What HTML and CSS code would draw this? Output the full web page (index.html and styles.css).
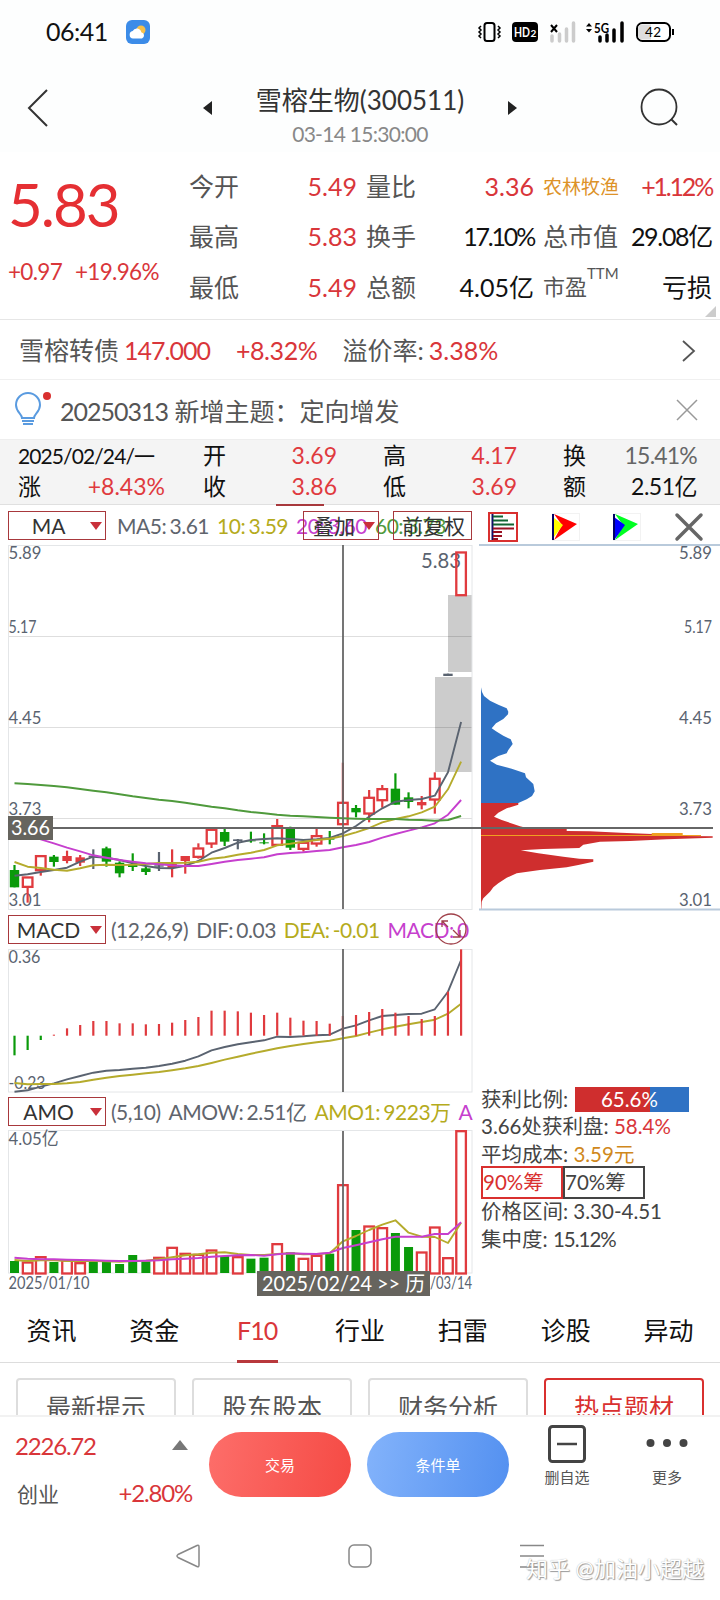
FILE: index.html
```
<!DOCTYPE html>
<html lang="zh-CN">
<head>
    <meta charset="UTF-8">
    <meta name="viewport" content="width=device-width, initial-scale=1.0">
    <title>雪榕生物(300511)</title>
    <link rel="stylesheet" href="styles.css">
</head>
<body>

    <div class="status-bar">
        <span class="time">06:41</span>
        <svg class="weather" width="24" height="24" viewBox="0 0 24 24">
            <rect width="24" height="24" rx="6" fill="#3c8ce8"/>
            <circle cx="15" cy="10" r="4.5" fill="#f7c04a"/>
            <path d="M7 18.500a3.800 3.800 0 0 1-.3-7.500 4.600 4.600 0 0 1 8.600 1.200 3.300 3.300 0 0 1 .7 6.300z" fill="#fff"/>
        </svg>
        <svg class="status-icons" width="200" height="24" viewBox="474 20 200 24">
            <rect x="484.500" y="23" width="10" height="18" rx="2.500" fill="none" stroke="#000" stroke-width="2"/>
            <path d="M481 26l-2 2 2 2-2 2 2 2-2 2 2 2M498 26l2 2-2 2 2 2-2 2 2 2-2 2" fill="none" stroke="#000" stroke-width="1.500"/>
            <rect x="512" y="22" width="26" height="20" rx="4" fill="#000"/>
            <text x="514" y="37" font-size="14" font-weight="700" fill="#fff" textLength="16" lengthAdjust="spacingAndGlyphs">HD</text>
            <text x="530.500" y="37" font-size="10" font-weight="700" fill="#fff">2</text>
            <path d="M551 25l6 7M557 25l-6 7" stroke="#000" stroke-width="2"/>
            <path d="M552 41v-5M559.500 41v-7M566.500 41V29M573.500 41V23" stroke="#ccc" stroke-width="3.500" stroke-linecap="round"/>
            <path d="M586 26.500l3-3.500 3 3.500zM586 29l3 3.500 3-3.500z" fill="#000"/>
            <text x="594" y="33" font-size="13" font-weight="700" textLength="15" lengthAdjust="spacingAndGlyphs">5G</text>
            <path d="M600 41v-4M607 41v-6M614 41V30M622 41V23" stroke="#000" stroke-width="3.500" stroke-linecap="round"/>
            <rect x="637" y="23" width="33" height="18" rx="5.500" fill="#fff" stroke="#000" stroke-width="2"/>
            <path d="M642 24.500h9v15h-9a4 4 0 0 1-4-4v-7a4 4 0 0 1 4-4z" fill="#ddd"/>
            <path d="M673 29v6" stroke="#000" stroke-width="2"/>
            <text x="645" y="37" font-size="13.500" textLength="16">42</text>
        </svg>
    </div>

    <div class="header">
        <svg class="back" width="22" height="40" viewBox="0 0 22 40"><path d="M20 2L2 20l18 18" fill="none" stroke="#333" stroke-width="2"/></svg>
        <span class="arrow-left"></span>
        <div class="title">
            <h1>雪榕生物(300511)</h1>
            <p>03-14 15:30:00</p>
        </div>
        <span class="arrow-right"></span>
        <svg class="search" width="40" height="40" viewBox="0 0 40 40"><circle cx="19" cy="19" r="17.500" fill="none" stroke="#333" stroke-width="1.800"/><path d="M31 31l6 6" stroke="#333" stroke-width="2"/></svg>
    </div>

    <div class="quote">
        <div class="price">
            <div class="now">5.83</div>
            <div class="change"><span>+0.97</span><span>+19.96%</span></div>
        </div>
        <div class="quote-grid">
            <span>今开</span><b class="red">5.49</b><span>量比</span><b class="red">3.36</b><span class="sector">农林牧渔</span><b class="red tight">+1.12%</b>
            <span>最高</span><b class="red">5.83</b><span>换手</span><b class="tight">17.10%</b><span>总市值</span><b class="cap">29.08亿</b>
            <span>最低</span><b class="red">5.49</b><span>总额</span><b>4.05亿</b><span class="pe">市盈<sup>TTM</sup></span><b>亏损</b>
        </div>
        <i class="corner"></i>
    </div>

    <div class="bond">
        <span>雪榕转债</span><b class="red code">147.000</b><b class="red rate">+8.32%</b><span>溢价率:</span><b class="red prem">3.38%</b>
        <svg width="16" height="24" viewBox="0 0 16 24"><path d="M2 2l11 10L2 22" fill="none" stroke="#555" stroke-width="1.800"/></svg>
    </div>

    <div class="notice">
        <svg class="bulb" width="40" height="36" viewBox="0 0 40 36">
            <path d="M9 26c0-4-6-6-6-13a12 12 0 0 1 24 0c0 7-6 9-6 13z" fill="none" stroke="#5a9be0" stroke-width="2"/>
            <path d="M9 29h12M10 32h10" stroke="#5a9be0" stroke-width="1.800"/>
            <circle cx="34" cy="4" r="4" fill="#d9302f"/>
        </svg>
        <span class="notice-text"><span class="num">20250313</span> 新增主题：定向增发</span>
        <svg width="22" height="22" viewBox="0 0 22 22"><path d="M1 1l20 20M21 1L1 21" stroke="#999" stroke-width="1.500"/></svg>
    </div>

    <div class="ohlc">
        <span class="day">2025/02/24/一</span><span>开</span><b>3.69</b><span>高</span><b>4.17</b><span>换</span><b class="gray">15.41%</b>
        <span class="up">涨<b>+8.43%</b></span><span>收</span><b>3.86</b><span>低</span><b>3.69</b><span>额</span><b class="black">2.51亿</b>
    </div>

    <div class="charts">
        <div class="left">
            <div class="indicator ma">
                <div class="select">MA</div>
                <span class="c-dark">MA5: 3.61</span><span class="c-yellow">10: 3.59</span><span class="c-purple">20: 3.60</span><span class="c-green">60: 3.73</span>
                <div class="overlay add">叠加</div>
                <div class="overlay adjust">前复权</div>
            </div>
            <svg id="kline" width="476" height="365" viewBox="0 545 476 365">
                <g fill="#ccc"><rect x="448" y="595" width="24" height="77"/><rect x="435" y="677" width="37" height="95"/></g>
                <path d="M8 636.500h464M8 727.500h464M8 818.500h464" stroke="#000" stroke-opacity=".13"/>
                <rect x="8.500" y="545.500" width="463.500" height="364" fill="none" stroke="#e4e6e8"/>
            </svg>
            <div class="indicator macd">
                <div class="select">MACD</div>
                <span class="c-dark par">(12,26,9)</span><span class="c-dark">DIF: 0.03</span><span class="c-yellow">DEA: -0.01</span><span class="c-purple">MACD: 0</span>
                <svg class="expand" width="32" height="32" viewBox="0 0 32 32" fill="none" stroke="#a0404a" stroke-width="1.300"><circle cx="16" cy="16" r="15"/><path d="M7 14V8h6M7 8l6 6M25 17v7h-7M25 24l-7-7"/></svg>
            </div>
            <svg id="macd" width="476" height="144" viewBox="0 949 476 144">
                <rect x="8.500" y="949.500" width="463.500" height="142.500" fill="none" stroke="#e4e6e8"/>
            </svg>
            <div class="indicator amo">
                <div class="select">AMO</div>
                <span class="c-dark par">(5,10)</span><span class="c-dark">AMOW: 2.51亿</span><span class="c-yellow">AMO1: 9223万</span><span class="c-purple">A</span>
            </div>
            <svg id="amo" width="476" height="170" viewBox="0 1130 476 170">
                <rect x="8.500" y="1130.500" width="463.500" height="142.500" fill="none" stroke="#e4e6e8"/>
            </svg>
        </div>
        <div class="right">
            <div class="tools">
                <svg width="30" height="30" viewBox="0 0 30 30">
                    <rect x="1" y="1" width="28" height="28" fill="#fff" stroke="#d9302f" stroke-width="2"/>
                    <path d="M4.500 2v26" stroke="#116" stroke-width="2"/>
                    <path d="M5 4.500h10M5 8.500h15M5 12.500h21" stroke="#163" stroke-width="1.800"/>
                    <path d="M5 16.500h21M5 20h9M5 24h9M5 27h5" stroke="#912" stroke-width="1.800"/>
                </svg>
                <svg width="28" height="28" viewBox="0 0 28 28"><rect x=".5" y=".5" width="27" height="27" fill="none" stroke="#f2f2f2"/><path d="M2 1l23 10L2 27l8-15z" fill="#f00"/><path d="M2 5l9 7-9 12z" fill="#ff0"/><path d="M1 1v26" stroke="#006" stroke-width="2"/></svg>
                <svg width="28" height="28" viewBox="0 0 28 28"><rect x=".5" y=".5" width="27" height="27" fill="none" stroke="#f2f2f2"/><path d="M2 1l23 10L2 27l8-15z" fill="#0f2"/><path d="M1 4l11 8L2 26z" fill="#00f"/><path d="M1 1v26" stroke="#006" stroke-width="2"/></svg>
                <svg width="28" height="28" viewBox="0 0 28 28"><path d="M2 2l24 24M26 2L2 26" stroke="#666" stroke-width="3.500" stroke-linecap="round"/></svg>
            </div>
            <svg id="chips" width="244" height="367" viewBox="476 544 244 367">
                <path d="M479 545h241M479 909.500h241" stroke="#b9cadb" stroke-width="2"/>
            </svg>
            <div class="info">
                <div>获利比例: <span class="ratio">65.6%</span></div>
                <div>3.66处获利盘: <b class="red">58.4%</b></div>
                <div>平均成本: <b class="orange">3.59元</b></div>
                <div class="chip-btns"><span class="on">90%筹</span><span>70%筹</span></div>
                <div>价格区间: 3.30-4.51</div>
                <div>集中度: <span class="num">15.12%</span></div>
            </div>
        </div>
    </div>

    <div class="tabs">
        <span>资讯</span><span>资金</span><span class="active">F10</span><span>行业</span><span>扫雷</span><span>诊股</span><span>异动</span>
    </div>
    <div class="sub-tabs">
        <span>最新提示</span><span>股东股本</span><span>财务分析</span><span class="active">热点题材</span>
    </div>

    <div class="bottom-bar">
        <div class="index">
            <div><b>2226.72</b><i></i></div>
            <div><span>创业</span><b>+2.80%</b></div>
        </div>
        <button class="trade">交易</button>
        <button class="order">条件单</button>
        <div class="action">
            <svg width="38" height="38" viewBox="0 0 38 38"><rect x="1.500" y="1.500" width="35" height="35" rx="3" fill="none" stroke="#444" stroke-width="3"/><path d="M9 19h20" stroke="#444" stroke-width="2.500"/></svg>
            <span>删自选</span>
        </div>
        <div class="action more">
            <svg width="44" height="38" viewBox="0 0 44 38"><g fill="#444"><circle cx="5.500" cy="18" r="4"/><circle cx="22" cy="18" r="4"/><circle cx="38.500" cy="18" r="4"/></g></svg>
            <span>更多</span>
        </div>
    </div>

    <div class="nav-bar">
        <svg width="24" height="24" viewBox="0 0 24 24"><path d="M21 1.500Q23 .5 23 3v18q0 2.500-2 1.500L2 13.500q-2-1.500 0-3z" fill="none" stroke="#888" stroke-width="1.500"/></svg>
        <svg width="24" height="24" viewBox="0 0 24 24"><rect x="1" y="1" width="22" height="22" rx="5" fill="none" stroke="#888" stroke-width="1.500"/></svg>
        <svg width="24" height="24" viewBox="0 0 24 24"><path d="M0 1.500h24M0 12h24M0 23h24" stroke="#888" stroke-width="1.500"/></svg>
        <div class="watermark">知乎 @加油小超越</div>
    </div>

    <script>
        const RED = '#e03a3e', GREEN = '#0a9a0a', DARK = '#5a6370';
        const YELLOW = '#b5ab2c', PURPLE = '#c63fce', MA60 = '#4f9a3c';
        const step = 13.135, first = 14.5;
        const x = i => first + i * step;

        function add(id, html) {
            document.getElementById(id).insertAdjacentHTML('beforeend', html);
        }
        function rect(x, y, w, h, attrs) {
            return `<rect x="${x}" y="${y}" width="${w}" height="${h}" ${attrs}/>`;
        }
        function vline(x, y1, y2, color, w) {
            return `<path d="M${x} ${y1}V${y2}" stroke="${color}" stroke-width="${w}"/>`;
        }
        // values are thirds of a pixel below the base
        function curve(values, base, color) {
            const pts = values.map((v, i) => `${x(i).toFixed(1)},${(base + v / 3).toFixed(1)}`).join(' ');
            return `<polyline points="${pts}" fill="none" stroke="${color}" stroke-width="1.900" stroke-linejoin="round"/>`;
        }
        function label(tx, y, str, w, size, color, anchor) {
            return `<text x="${tx}" y="${y}" font-size="${size}" fill="${color}" textLength="${w}" lengthAdjust="spacingAndGlyphs" text-anchor="${anchor || 'start'}">${str}</text>`;
        }

        // type, body top, body bottom, high, low
        const candles = [
            ['g', 450, 502, 435, 502], ['r', 470, 500, 470, 548], ['r', 406, 450, 406, 467], ['g', 410, 426, 405, 440],
            ['R', 408, 423, 392, 430], ['R', 412, 428, 405, 438], ['d', 407, 411, 388, 447], ['g', 385, 425, 380, 440],
            ['g', 428, 460, 424, 472], ['g', 433, 441, 400, 453], ['g', 445, 456, 437, 465], ['d', 436, 440, 396, 453],
            ['R', 432, 444, 388, 472], ['R', 408, 423, 408, 461], ['r', 383, 410, 370, 416], ['r', 327, 370, 327, 384],
            ['g', 336, 365, 325, 378], ['d', 358, 363, 357, 388], ['g', 361, 364, 335, 368], ['g', 367, 370, 340, 373],
            ['r', 316, 374, 297, 376], ['g', 324, 383, 320, 390], ['r', 366, 386, 366, 395], ['r', 346, 370, 327, 380],
            ['g', 355, 359, 333, 373], ['r', 246, 312, 128, 312], ['g', 264, 277, 255, 292], ['r', 231, 280, 210, 307],
            ['r', 205, 240, 195, 263], ['g', 206, 254, 160, 254], ['g', 232, 246, 217, 265], ['R', 246, 256, 228, 268],
            ['r', 174, 238, 157, 281], ['d', -139, -132, -139, -132], ['r', -505, -375, -505, -375]
        ];
        const ma5 = [467, 463, 456, 450, 443, 425, 410, 413, 420, 430, 438, 444, 445, 437, 423, 398, 384, 368, 360, 357, 355, 357, 360, 358, 354, 340, 318, 290, 265, 245, 240, 237, 227, 157, 6];
        const ma10 = [426, 440, 444, 449, 452, 445, 436, 434, 435, 434, 432, 429, 429, 428, 425, 416, 412, 404, 398, 390, 376, 371, 365, 360, 356, 348, 337, 324, 307, 297, 289, 277, 260, 208, 125];
        const ma20 = [325, 342, 358, 370, 383, 394, 406, 413, 420, 425, 430, 433, 436, 438, 438, 432, 425, 420, 416, 412, 403, 399, 397, 393, 390, 382, 375, 366, 353, 342, 332, 322, 310, 284, 240];
        const ma60 = [190, 192, 195, 198, 202, 207, 212, 217, 223, 229, 234, 239, 243, 248, 254, 260, 265, 271, 276, 280, 284, 287, 289, 291, 293, 295, 296, 297, 297, 297, 299, 300, 302, 300, 288];

        let k = '';
        ['5.89', '5.17', '4.45', '3.73', '3.01'].forEach((t, i) => {
            const y = [559, 633, 724, 815, 906][i];
            k += label(8.5, y, t, i == 1 ? 28 : 33, 18, DARK);
            add('chips', label(712, y, t, i == 1 ? 28 : 33, 18, DARK, 'end'));
        });
        k += label(421, 568, '5.83', 40, 21, DARK);
        candles.forEach(([type, top, bottom, high, low], i) => {
            const cx = x(i), t = 720 + top / 3, b = 720 + bottom / 3;
            const color = type == 'd' ? DARK : type == 'g' ? GREEN : RED;
            if (type == 'r') {
                k += vline(cx, 720 + high / 3, t, color, 2.2) + vline(cx, b, 720 + low / 3, color, 2.2);
                k += rect(cx - 4.8, t + .8, 9.6, b - t - .6, `fill="none" stroke="${color}" stroke-width="2.300"`);
            } else {
                k += vline(cx, 720 + high / 3, 720 + low / 3, color, 2.2) + rect(cx - 4.7, t, 9.4, b - t, `fill="${color}"`);
            }
        });
        k += curve(ma5, 720, DARK) + curve(ma10, 720, YELLOW) + curve(ma20, 720, PURPLE) + curve(ma60, 720, MA60);
        k += vline(343, 545, 909, '#666', 1.8) + '<path d="M8 828h468" stroke="#666" stroke-width="1.800"/>';
        k += rect(8, 816, 45, 24, 'fill="#66645e"') + label(11, 835, '3.66', 39, 20.5, '#fff');
        add('kline', k);

        const hist = [436, 420, 390, 374, 355, 345, 333, 333, 340, 340, 343, 342, 338, 330, 321, 302, 302, 304, 308, 315, 308, 323, 332, 333, 341, 318, 315, 306, 297, 308, 318, 327, 318, 245, 118];
        const dif = [545, 541, 530, 520, 508, 498, 488, 482, 480, 476, 473, 468, 461, 452, 439, 421, 411, 403, 397, 391, 380, 381, 379, 376, 374, 356, 346, 331, 318, 315, 312, 311, 298, 245, 150];
        const dea = [519, 523, 522, 522, 520, 516, 509, 503, 498, 494, 490, 486, 481, 475, 468, 459, 449, 440, 431, 423, 415, 408, 402, 397, 392, 385, 378, 368, 358, 350, 343, 336, 329, 311, 281];
        let m = label(8.5, 963, '0.36', 32, 18, DARK) + label(8.5, 1089, '-0.23', 37, 18, DARK);
        m += curve(dif, 910, DARK) + curve(dea, 910, YELLOW);
        hist.forEach((v, i) => {
            m += vline(x(i), 1035.7, 910 + v / 3, v > 377 ? GREEN : RED, 2.2);
        });
        m += vline(343, 949, 1092, '#666', 1.8);
        add('macd', m);

        // negative = falling day
        const amo = [-513, 516, 500, -516, 510, 518, -516, -516, -522, -495, -514, 502, 472, 490, 493, 480, -498, 500, -506, -503, 461, -487, 505, 496, -491, 284, -420, 408, 413, -429, -471, 486, 411, 503, 122];
        const amo5 = [510, 513, 511, 511, 513, 513, 513, 514, 515, 513, 512, 508, 502, 496, 493, 488, 487, 492, 495, 495, 492, 490, 493, 492, 490, 454, 438, 420, 404, 391, 428, 440, 441, 459, 398];
        const amo10 = [503, 506, 508, 508, 509, 510, 511, 512, 513, 513, 512, 511, 508, 506, 504, 500, 498, 496, 495, 497, 493, 490, 491, 492, 488, 474, 466, 457, 448, 440, 440, 440, 432, 432, 397];
        let a = label(8.5, 1145, '4.05亿', 50, 18, DARK);
        amo.forEach((v, i) => {
            const t = 1090 + Math.abs(v) / 3;
            a += v < 0 ? rect(x(i) - 4.5, t, 9, 1273 - t, `fill="${GREEN}"`)
                : rect(x(i) - 4.8, t + .5, 9.6, 1273 - t, `fill="none" stroke="${RED}" stroke-width="2.300"`);
        });
        a += curve(amo5, 1090, YELLOW) + curve(amo10, 1090, PURPLE) + vline(343, 1131, 1273, '#666', 1.8);
        a += label(8.5, 1289, '2025/01/10', 81, 17.5, DARK) + label(472, 1289, '/03/14', 42, 17.5, DARK, 'end');
        a += rect(257, 1271, 173, 25, 'fill="#66645e"') + label(262, 1290.5, '2025/02/24 &gt;&gt; 历', 163, 20.5, '#fff');
        add('amo', a);

        // cost distribution outline, above and below the closing price
        const upper = [[33, 52], [36, 66], [42, 78], [60, 92], [85, 104], [110, 115], [115, 125], [114, 133], [100, 147], [78, 160], [65, 175], [78, 184], [100, 197], [122, 208], [128, 222], [115, 240], [110, 250], [85, 258], [60, 272], [80, 284], [125, 296], [165, 310], [168, 322], [190, 342], [194, 364], [186, 378], [170, 388], [145, 399], [33, 399]];
        const lower = [[33, 399], [145, 399], [145, 404], [110, 415], [85, 428], [72, 440], [95, 450], [130, 462], [150, 469], [180, 476], [290, 477], [290, 483], [360, 484], [452, 488], [545, 492], [637, 498], [728, 499], [728, 503], [590, 508], [480, 513], [390, 515], [340, 524], [328, 534], [220, 537], [152, 541], [205, 550], [280, 560], [328, 566], [370, 568], [370, 575], [325, 585], [290, 592], [210, 600], [140, 610], [110, 623], [85, 640], [70, 652], [60, 665], [40, 685], [35, 695], [34, 716], [33, 716]];
        const poly = (pts, color) => `<polygon points="${pts.map(p => (470 + p[0] / 3).toFixed(1) + ',' + (670 + p[1] / 3).toFixed(1)).join(' ')}" fill="${color}"/>`;
        let c = poly(upper, '#2f72c4') + poly(lower, '#cf2e2e');
        c += '<path d="M651.700 834.300h31" stroke="#f0a020" stroke-width="2.600"/><path d="M481 835.500h220" stroke="#f0a020" stroke-width="1.200"/>';
        c += '<path d="M476 828h237" stroke="#666" stroke-width="1.800"/>';
        add('chips', c);
    </script>

</body>
</html>
```
FILE: styles.css
```
* {
    box-sizing: border-box;
}

body {
    margin: 0;
    width: 720px;
    height: 1600px;
    overflow: hidden;
    background: #fff;
    color: #555;
    font-family: Lato, "Noto Sans CJK SC", sans-serif;
    font-size: 25px;
    line-height: 1;
}

h1, p {
    margin: 0;
    font-weight: 400;
}

b {
    font-weight: 400;
}

svg {
    display: block;
    flex: none;
    overflow: visible;
}

.red {
    color: #d9363a;
}

.orange {
    color: #d0881c;
}

.num {
    letter-spacing: -1px;
}

.status-bar {
    display: flex;
    align-items: center;
    height: 64px;
    padding: 0 46px;
    color: #111;
    background: #fdfefe;
}

.time {
    width: 80px;
    margin-top: -2px;
    letter-spacing: -0.5px;
}

.status-icons {
    margin-left: auto;
}

.header {
    display: flex;
    align-items: center;
    height: 88px;
    padding: 0 40px 0 27px;
    background: #fdfefe;
}

.arrow-left, .arrow-right {
    border: 7px solid transparent;
}

.arrow-left {
    margin-left: 147px;
    border-right: 9px solid #222;
}

.arrow-right {
    border-left: 9px solid #222;
}

.title {
    flex: 1;
    padding-top: 14px;
    text-align: center;
}

.title h1 {
    color: #333;
    font-size: 26px;
    margin-bottom: 10px;
}

.title p {
    color: #888;
    font-size: 21px;
    letter-spacing: -0.7px;
}

.search {
    margin-left: 116px;
}

.quote {
    position: relative;
    display: flex;
    height: 168px;
    padding: 0 8px;
    border-bottom: 1px solid #e6e6e6;
}

.price {
    width: 181px;
    color: #e52f33;
}

.now {
    padding-top: 22px;
    font-size: 60px;
    letter-spacing: -2px;
}

.change {
    display: flex;
    gap: 13px;
    margin-top: 27px;
    font-size: 22.5px;
    letter-spacing: -0.7px;
    color: #d9363a;
}

.quote-grid {
    display: grid;
    grid-template-columns: 50px 127px 68px 109px 80px 89px;
    grid-template-rows: repeat(3, 50.5px);
    padding-top: 9px;
    align-items: center;
    white-space: nowrap;
}

.quote-grid > b {
    padding-right: 9px;
    text-align: right;
    color: #111;
}

.quote-grid > b:nth-child(6n) {
    padding-right: 0;
}

.quote-grid > b.red {
    color: #d9363a;
}

.quote-grid > .tight {
    letter-spacing: -2.2px;
}

.quote-grid > .cap {
    letter-spacing: -1.3px;
}

.quote-grid > .sector {
    color: #dd9228;
    font-size: 19px;
}

.pe {
    font-size: 22px;
}

.pe sup {
    position: relative;
    top: -8px;
    font-size: 15px;
    line-height: 0;
}

.corner {
    position: absolute;
    right: 4px;
    bottom: 2px;
    border-left: 11px solid transparent;
    border-bottom: 11px solid #ccc;
}

.bond {
    display: flex;
    align-items: center;
    height: 60px;
    padding: 2px 23px 0 19px;
    border-bottom: 1px solid #f0f0f0;
}

.bond .code {
    margin: 0 26px 0 5px;
    letter-spacing: -1px;
}

.bond .rate {
    margin-right: 25px;
    letter-spacing: -0.4px;
}

.bond .prem {
    margin-left: 5px;
}

.bond svg {
    margin-left: auto;
}

.notice {
    display: flex;
    align-items: center;
    height: 59px;
    padding: 0 22px 0 13px;
}

.notice-text {
    margin: 4px auto 0 7px;
}

.ohlc {
    position: relative;
    display: grid;
    grid-template-columns: 185px 40px 140px 40px 140px 40px 94px;
    grid-template-rows: 31px 31px;
    align-items: center;
    height: 66px;
    padding-left: 18px;
    border-top: 1px solid #eee;
    border-bottom: 1px solid #e0e0e0;
    background: #f4f4f4;
    color: #111;
    font-size: 23px;
    white-space: nowrap;
}

.ohlc::after {
    content: "";
    position: absolute;
    left: 276px;
    bottom: -2px;
    width: 48px;
    height: 2px;
    background: #a8383c;
}

.ohlc b {
    text-align: right;
    color: #e03a3e;
}

.ohlc > b {
    padding-right: 46px;
}

.ohlc > b:nth-child(7n) {
    padding-right: 0;
}

.ohlc .gray {
    color: #666;
    letter-spacing: -0.8px;
}

.ohlc .black {
    color: #111;
    letter-spacing: -0.5px;
}

.day {
    font-size: 21px;
    letter-spacing: -0.9px;
}

.up {
    display: flex;
    justify-content: space-between;
    padding-right: 38px;
}

.charts {
    display: flex;
    height: 795px;
}

.left {
    width: 476px;
}

.indicator {
    position: relative;
    display: flex;
    align-items: center;
    gap: 8px;
    padding-left: 8px;
    font-size: 21px;
    white-space: nowrap;
}

.indicator > span {
    letter-spacing: -0.5px;
    word-spacing: -1.5px;
}

.ma {
    height: 40px;
}

.ma > span {
    position: relative;
    left: 3px;
}

.macd {
    height: 39px;
}

.amo {
    height: 37px;
}

.select {
    position: relative;
    display: flex;
    flex: none;
    align-items: center;
    justify-content: center;
    width: 98px;
    height: 29px;
    padding-right: 17px;
    border: 1px solid #a8383c;
    color: #333;
}

.select::after, .add::after {
    content: "";
    position: absolute;
    right: 3px;
    top: 10px;
    border: 6px solid transparent;
    border-top: 8px solid #c9303a;
    border-bottom: 0;
}

.indicator .par {
    margin-left: -3px;
}

.overlay {
    position: absolute;
    top: 6px;
    height: 29px;
    border: 1px solid #a8383c;
    color: #333;
    line-height: 27px;
}

.add {
    left: 303px;
    width: 76px;
    padding-left: 9px;
}

.adjust {
    left: 393px;
    width: 79px;
    padding-left: 8px;
}

.expand {
    position: absolute;
    left: 435px;
    top: 3px;
}

.c-dark {
    color: #5f656d;
}

.c-yellow {
    color: #b5ab1c;
}

.c-purple {
    color: #c63fce;
}

.c-green {
    color: #4f9a3c;
}

.right {
    width: 244px;
}

.tools {
    display: flex;
    align-items: center;
    justify-content: space-between;
    height: 39px;
    padding: 4px 17px 0 12px;
}

.info {
    padding: 174px 0 0 5px;
    font-size: 20.5px;
    color: #444;
    white-space: nowrap;
}

.info div {
    height: 27.4px;
    line-height: 28px;
}

.ratio {
    display: inline-block;
    width: 114px;
    height: 25px;
    margin-left: 2px;
    line-height: 25px;
    padding-right: 6px;
    text-align: center;
    color: #fff;
    background: linear-gradient(90deg, #cf2e2e 65.6%, #2f72c4 65.6%);
}

.info .chip-btns {
    display: flex;
    height: 31px;
    margin-top: -1px;
}

.chip-btns span {
    width: 82px;
    height: 33px;
    line-height: 29px;
    border: 2px solid #444;
}

.chip-btns .on {
    color: #d9302f;
    border-color: #d9302f;
}

.tabs {
    display: flex;
    height: 63px;
    border-bottom: 1px solid #ddd;
    color: #111;
}

.tabs span {
    position: relative;
    flex: 1;
    text-align: center;
    line-height: 60px;
}

.tabs .active {
    color: #d9363a;
    letter-spacing: -1px;
}

.tabs .active::after {
    content: "";
    position: absolute;
    left: 31px;
    bottom: -1px;
    width: 41px;
    height: 3px;
    background: #b8383c;
}

.sub-tabs {
    display: flex;
    gap: 16px;
    height: 52px;
    padding: 15px 16px 0;
    overflow: hidden;
}

.sub-tabs span {
    flex: 1;
    height: 60px;
    line-height: 55px;
    border: 2px solid #ddd;
    border-radius: 4px;
    text-align: center;
}

.sub-tabs .active {
    color: #d9302f;
    border-color: #d9302f;
}

.bottom-bar {
    display: flex;
    height: 101px;
    padding-left: 15px;
    border-top: 2px solid #f2f2f2;
}

.index {
    width: 194px;
    padding: 17px 17px 0 0;
    font-size: 24px;
}

.index div {
    display: flex;
    justify-content: space-between;
    align-items: center;
    height: 24px;
    margin-bottom: 23px;
}

.index b {
    color: #d9363a;
    letter-spacing: -1.2px;
}

.index span {
    margin-left: 2px;
    font-size: 21px;
}

.index i {
    margin: 0 4px 3px 0;
    border: 8px solid transparent;
    border-top: 0;
    border-bottom: 10px solid #777;
}

button {
    width: 142px;
    height: 65px;
    margin: 15px 16px 0 0;
    padding: 0;
    border: 0;
    border-radius: 33px;
    color: #fff;
    font-family: inherit;
    font-size: 15px;
}

.trade {
    background: linear-gradient(100deg, #fd6e6a, #f54a44);
}

.order {
    background: linear-gradient(100deg, #83b3fb, #5390f0);
}

.action {
    display: flex;
    flex-direction: column;
    align-items: center;
    width: 84px;
    padding-top: 8px;
    gap: 7px;
    font-size: 15px;
}

.more {
    margin-left: 16px;
}

.nav-bar {
    position: relative;
    display: flex;
    justify-content: space-between;
    padding: 28px 176px 0;
}

.watermark {
    position: absolute;
    right: 16px;
    top: 42px;
    color: #fff;
    font-size: 22px;
    white-space: nowrap;
    text-shadow: 1px 1px 1px #999, 0 0 1px #aaa;
}
```
